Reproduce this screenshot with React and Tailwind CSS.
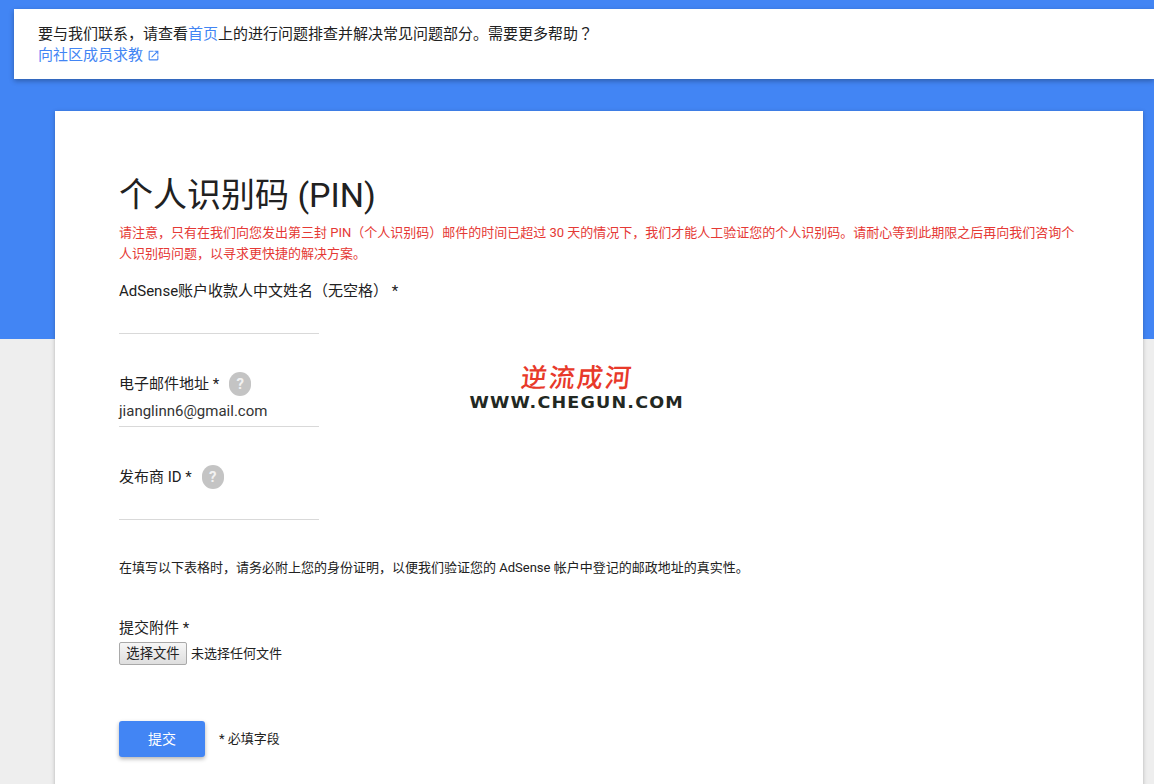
import React from 'react'

const FONT = "font-['Roboto','Noto_Sans_CJK_SC',sans-serif]"

function HelpBadge() {
    return (
        <span className="flex h-6 w-[22px] items-center justify-center rounded-full bg-[#c4c4c4] text-[15px] font-bold text-[#f2f2f2]">?</span>
    )
}

function Field({ label, help, value, className }) {
    return (
        <div className={className}>
            <div className="flex h-6 items-center gap-[10px] text-[15px] text-[#212121]">
                <span>{label}</span>
                {help && <HelpBadge />}
            </div>
            <div className="h-[31px] w-[200px] border-b border-[#d9d9d9] pt-[3px] text-[15px] leading-[24px] text-[#333333]">
                {value}
            </div>
        </div>
    )
}

export default function App() {
    return (
        <div className={`${FONT} h-[784px] overflow-hidden bg-[linear-gradient(#4285f4_339px,#eeeeee_339px)]`}>
            {/* Top notice */}
            <div className="ml-[14px] h-[70px] translate-y-[9px] bg-white pl-6 pt-[13px] text-[15px] leading-[22px] text-[#212121] shadow-[0_2px_5px_rgba(0,0,0,0.3)]">
                <div className="h-[22px]">要与我们联系，请查看<span className="text-[#4285f4]">首页</span>上的进行问题排查并解决常见问题部分。需要更多帮助<span className="font-['Noto_Sans_CJK_TC',sans-serif]">？</span></div>
                <div className="flex items-center gap-[4px] text-[#4285f4]">
                    向社区成员求教
                    <svg width="13" height="13" viewBox="0 0 24 24" fill="currentColor">
                        <path d="M19 19H5V5h7V3H5c-1.11 0-2 .9-2 2v14c0 1.1.89 2 2 2h14c1.1 0 2-.9 2-2v-7h-2v7zM14 3v2h3.59l-9.83 9.83 1.41 1.41L19 6.41V10h2V3h-7z" />
                    </svg>
                </div>
            </div>

            {/* Form card */}
            <div className="relative ml-[55px] mr-[11px] mt-[41px] h-[700px] bg-white pl-16 pr-[64px] pt-[60px] shadow-[0_1px_4px_rgba(0,0,0,0.25)]">
                <h1 className="h-12 text-[34px] font-normal leading-[48px] text-[#212121]">个人识别码 (PIN)</h1>
                <p className="mt-[3px] text-[13px] leading-[21px] text-[#e53935]">
                    请注意，只有在我们向您发出第三封 PIN（个人识别码）邮件的时间已超过 30 天的情况下，我们才能人工验证您的个人识别码。请耐心等到此期限之后再向我们咨询个人识别码问题，以寻求更快捷的解决方案。
                </p>

                <Field className="mt-[15px]" label="AdSense账户收款人中文姓名（无空格） *" />
                <Field className="mt-[38px]" label="电子邮件地址 *" help value="jianglinn6@gmail.com" />
                <Field className="mt-[38px]" label="发布商 ID *" help />

                <p className="mt-[39px] text-[13px] leading-[18px] text-[#212121]">
                    在填写以下表格时，请务必附上您的身份证明，以便我们验证您的 AdSense 帐户中登记的邮政地址的真实性。
                </p>

                <div className="mt-[41px] text-[15px] leading-[20px] text-[#212121]">提交附件 *</div>
                <div className="mt-[4px] flex items-center gap-1 text-[13px] text-[#212121]">
                    <button className="h-[23px] w-[68px] rounded-[2px] border border-[#a9a9a9] bg-[linear-gradient(#f6f6f6,#dedede)] text-[13.33px] leading-none">选择文件</button>
                    <span>未选择任何文件</span>
                </div>

                <div className="mt-[56px] flex items-center gap-[14px]">
                    <button className="h-9 w-[86px] rounded-[3px] bg-[#4285f4] text-[14px] text-white shadow-[0_2px_4px_rgba(0,0,0,0.3)]">提交</button>
                    <span className="text-[13px] text-[#212121]">* 必填字段</span>
                </div>

                {/* Watermark */}
                <div className="absolute left-[415px] top-[252px] flex w-[214px] flex-col items-center">
                    <span className="-skew-x-6 text-[26px] font-medium leading-[30px] tracking-[2px] text-[#e8392a]">逆流成河</span>
                    <span className="mt-[3px] scale-x-[1.17] whitespace-nowrap font-['DejaVu_Sans',sans-serif] text-[15px] font-bold leading-[15px] tracking-[1px] text-[#222822]">WWW.CHEGUN.COM</span>
                </div>
            </div>
        </div>
    )
}
